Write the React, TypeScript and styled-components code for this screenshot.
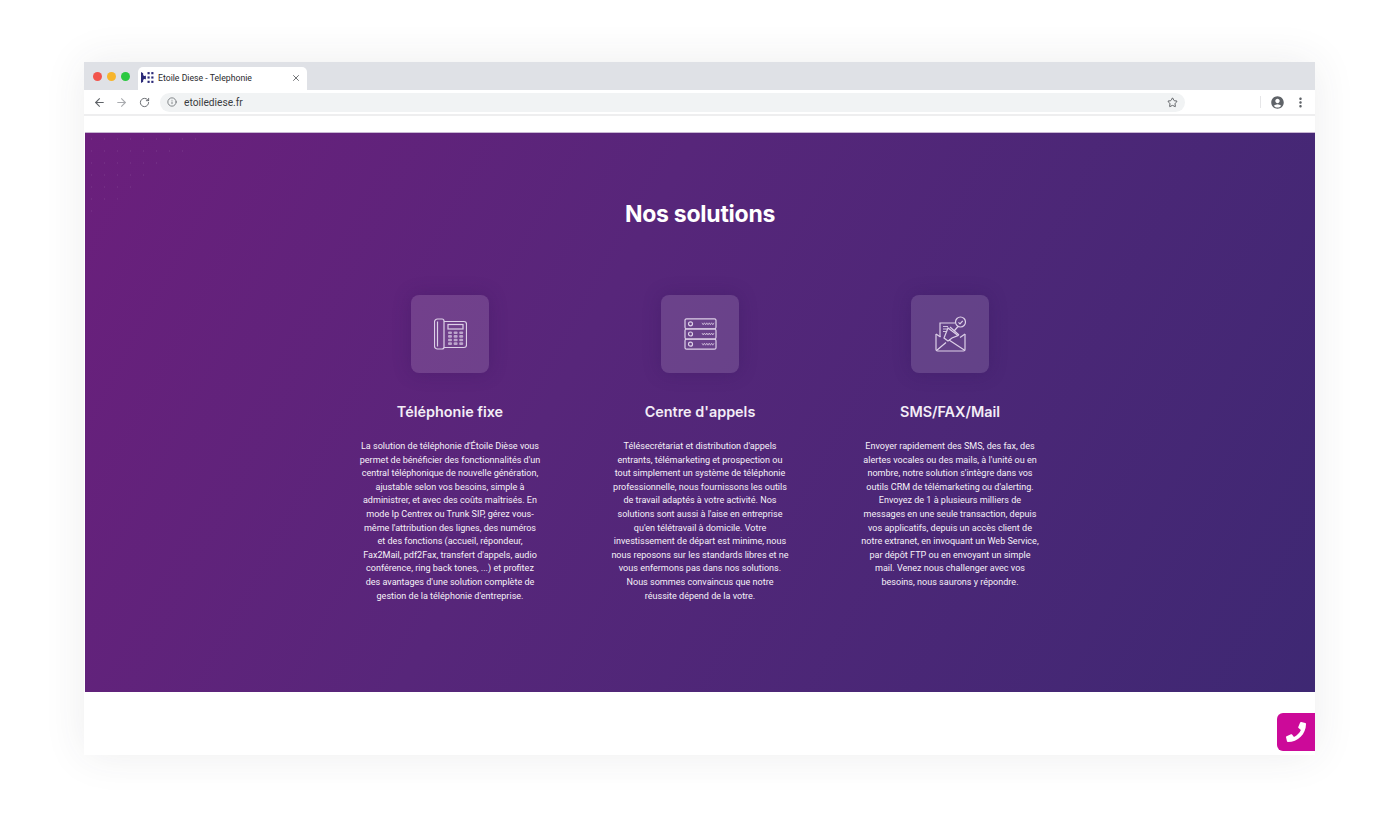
import React from "react";
import styled, { createGlobalStyle } from "styled-components";
import { ArrowLeft, ArrowRight, RotateCw, Info, Star, X } from "lucide-react";
import { FaPhone } from "react-icons/fa";
import { MdAccountCircle, MdMoreVert } from "react-icons/md";

const Global = createGlobalStyle`
    html, body {
        margin: 0;
        padding: 0;
        background: #ffffff;
        font-family: "Roboto", "Liberation Sans", sans-serif;
    }
`;

const Page = styled.div`
    width: 1400px;
    height: 820px;
    padding: 62px 85px 0 84px;
    box-sizing: border-box;
    overflow: hidden;
`;

const Browser = styled.div`
    position: relative;
    height: 693px;
    display: flex;
    flex-direction: column;
    background: #fff;
    box-shadow: 0 0 40px rgba(60, 60, 70, 0.09);
`;

const TabStrip = styled.div`
    height: 28px;
    flex: none;
    display: flex;
    align-items: flex-end;
    background: #dfe1e6;
    padding-left: 9px;
    box-sizing: border-box;
`;

const Lights = styled.div`
    display: flex;
    gap: 5px;
    align-self: flex-start;
    margin-top: 10px;
    width: 46px;
`;

const Light = styled.span<{ $color: string }>`
    width: 9px;
    height: 9px;
    border-radius: 50%;
    background: ${(p) => p.$color};
`;

const Tab = styled.div`
    width: 169px;
    height: 23px;
    margin-left: -1px;
    display: flex;
    align-items: center;
    background: #fff;
    border-radius: 5px 5px 0 0;
    padding: 0 6px 2px 3px;
    box-sizing: border-box;
    font-size: 8.7px;
    color: #2a2a2e;
`;

const TabTitle = styled.span`
    margin-left: 4px;
    flex: 1;
    white-space: nowrap;
`;

const Toolbar = styled.div`
    height: 26px;
    flex: none;
    display: flex;
    align-items: center;
    padding: 0 7px 0 4px;
    box-sizing: border-box;
    border-bottom: 2px solid #eeeeef;
    background: #fff;
`;

const NavButton = styled.span<{ $muted?: boolean }>`
    width: 22.5px;
    height: 20px;
    display: flex;
    align-items: center;
    justify-content: center;
    color: ${(p) => (p.$muted ? "#a9abaf" : "#5f6368")};
`;

const Omnibox = styled.div`
    width: 1025px;
    height: 19px;
    margin-left: 4.5px;
    display: flex;
    align-items: center;
    padding: 0 7px;
    box-sizing: border-box;
    background: #f1f3f4;
    border-radius: 10px;
    color: #5f6368;
`;

const Url = styled.span`
    flex: 1;
    margin-left: 7px;
    font-size: 10.2px;
    color: #3a3c40;
`;

const Actions = styled.div`
    margin-left: auto;
    display: flex;
    align-items: center;
    gap: 8px;
    color: #5f6368;
`;

const Divider = styled.span`
    width: 1px;
    height: 12px;
    background: #e6e6e8;
    margin-right: 1px;
`;

const Gap = styled.div`
    height: 17px;
    flex: none;
    background: #fff;
`;

const Hero = styled.section`
    position: relative;
    height: 559px;
    flex: none;
    margin-left: 1px;
    padding-top: 66px;
    box-sizing: border-box;
    background: linear-gradient(118deg, #6b1f7c 0%, #57267a 40%, #3e2873 100%);
    box-shadow: 0 -1px 0 #c8b6d3;
    color: #fff;
    text-align: center;

    &::before {
        content: "";
        position: absolute;
        left: 0;
        top: 0;
        width: 125px;
        height: 90px;
        background-image: radial-gradient(rgba(255, 255, 255, 0.06) 0.7px, transparent 1.1px);
        background-size: 13px 12px;
        clip-path: polygon(0 0, 100% 0, 0 100%);
    }
`;

const Title = styled.h2`
    margin: 0;
    font-family: "Inter", "Liberation Sans", sans-serif;
    font-size: 23px;
    line-height: 30px;
    font-weight: 700;
    letter-spacing: -0.25px;
`;

const Columns = styled.div`
    margin-top: 66px;
    display: flex;
    justify-content: center;
`;

const Column = styled.article`
    width: 250px;
    display: flex;
    flex-direction: column;
    align-items: center;
`;

const Tile = styled.div`
    width: 78px;
    height: 78px;
    display: flex;
    align-items: center;
    justify-content: center;
    border-radius: 8px;
    background: rgba(255, 255, 255, 0.13);
    box-shadow: 0 0 18px rgba(50, 20, 90, 0.3);
    color: #ddd0e8;
`;

const Name = styled.h3`
    margin: 28px 0 0;
    font-family: "Inter", "Liberation Sans", sans-serif;
    font-size: 14.4px;
    line-height: 22px;
    font-weight: 600;
    color: #f3edf6;
`;

const Text = styled.p`
    margin: 17px 0 0;
    font-size: 9.05px;
    line-height: 13.6px;
    font-weight: 400;
    color: #f6f1f8;
    white-space: pre-line;
`;

const CallButton = styled.div`
    position: absolute;
    right: 0;
    bottom: 4px;
    width: 38px;
    height: 38px;
    display: flex;
    align-items: center;
    justify-content: center;
    background: #cc0a99;
    border-radius: 6px 0 0 6px;
    color: #fff;
`;

const Favicon = () => (
    <svg width="13" height="13" viewBox="0 0 12 12" fill="#2b2a78">
        <path d="M0 1l2 1v2l2 1v2L2 8v2l-2 1z" />
        <path d="M2.5 5.2l2-1v3.6l-2-1z" />
        <rect x="6" y="1" width="2" height="2" />
        <rect x="9.5" y="1" width="2" height="2" />
        <rect x="6" y="5" width="2" height="2" />
        <rect x="9.5" y="5" width="2" height="2" />
        <rect x="6" y="9" width="2" height="2" />
        <rect x="9.5" y="9" width="2" height="2" />
    </svg>
);

const PhoneIcon = () => (
    <svg width="33" height="32" viewBox="0 0 33 32" fill="none" stroke="currentColor" strokeWidth="1.2">
        <path d="M3.5 1h4.5a2 2 0 0 1 2 2v26a2 2 0 0 1-2 2H3.5a3 3 0 0 1-3-3V4a3 3 0 0 1 3-3z" />
        <path d="M3.5 3.5v25" />
        <path d="M10 3.5h20a2.5 2.5 0 0 1 2.5 2.5v21a2.5 2.5 0 0 1-2.5 2.5H10" />
        <rect x="14" y="6.5" width="15" height="4.5" />
        <g fill="currentColor" stroke="none" opacity="0.7">
            {[0, 1, 2, 3].map((r) =>
                [0, 1, 2].map((c) => (
                    <rect key={r + "-" + c} x={14 + c * 5.6} y={13.5 + r * 3.6} width="4" height="2.6" rx="1" />
                ))
            )}
        </g>
    </svg>
);

const ServerIcon = () => (
    <svg width="33" height="32" viewBox="0 0 33 32" fill="none" stroke="currentColor" strokeWidth="1.2">
        {[0.8, 11, 21.2].map((y) => (
            <g key={y}>
                <rect x="1" y={y} width="31" height="10" rx="1.5" />
                <circle cx="6.5" cy={y + 5} r="2" />
                <path d={`M18 ${y + 4}l1.2 2 1.2-2 1.2 2 1.2-2 1.2 2 1.2-2 1.2 2 1.2-2 1.2 2 1.2-2`} strokeWidth="0.9" opacity="0.8" />
            </g>
        ))}
    </svg>
);

const MailIcon = () => (
    <svg width="31" height="36" viewBox="0 0 31 36" fill="none" stroke="currentColor" strokeWidth="1.2">
        <path d="M1 18v15.5A1.5 1.5 0 0 0 2.5 35h26a1.5 1.5 0 0 0 1.5-1.5V18" />
        <path d="M1 18l4.5 3M30 18l-5 3.5" />
        <path d="M1.5 34.5l9.5-8M30 34.5L14 24" />
        <path d="M5 21V7h15" />
        <path d="M8 10.5h5M8 13h4M8 15.5h3" strokeWidth="0.9" />
        <path d="M9 22l4-10 10 7.5-6 2.5-4 3z" />
        <path d="M15 11l9 8M19.5 14.5l3.5-4" />
        <circle cx="25.5" cy="6" r="5" />
        <path d="M23.5 6.3l1.5 1.5 2.7-3" />
    </svg>
);

const solutions = [
    {
        icon: <PhoneIcon />,
        name: "Téléphonie fixe",
        text: `La solution de téléphonie d'Étoile Dièse vous
permet de bénéficier des fonctionnalités d'un
central téléphonique de nouvelle génération,
ajustable selon vos besoins, simple à
administrer, et avec des coûts maîtrisés. En
mode Ip Centrex ou Trunk SIP, gérez vous-
même l'attribution des lignes, des numéros
et des fonctions (accueil, répondeur,
Fax2Mail, pdf2Fax, transfert d'appels, audio
conférence, ring back tones, ...) et profitez
des avantages d'une solution complète de
gestion de la téléphonie d'entreprise.`,
    },
    {
        icon: <ServerIcon />,
        name: "Centre d'appels",
        text: `Télésecrétariat et distribution d'appels
entrants, télémarketing et prospection ou
tout simplement un système de téléphonie
professionnelle, nous fournissons les outils
de travail adaptés à votre activité. Nos
solutions sont aussi à l'aise en entreprise
qu'en télétravail à domicile. Votre
investissement de départ est minime, nous
nous reposons sur les standards libres et ne
vous enfermons pas dans nos solutions.
Nous sommes convaincus que notre
réussite dépend de la votre.`,
    },
    {
        icon: <MailIcon />,
        name: "SMS/FAX/Mail",
        text: `Envoyer rapidement des SMS, des fax, des
alertes vocales ou des mails, à l'unité ou en
nombre, notre solution s'intègre dans vos
outils CRM de télémarketing ou d'alerting.
Envoyez de 1 à plusieurs milliers de
messages en une seule transaction, depuis
vos applicatifs, depuis un accès client de
notre extranet, en invoquant un Web Service,
par dépôt FTP ou en envoyant un simple
mail. Venez nous challenger avec vos
besoins, nous saurons y répondre.`,
    },
];

function App() {
    return (
        <Page>
            <Global />
            <Browser>
                <TabStrip>
                    <Lights>
                        <Light $color="#f2544c" />
                        <Light $color="#f7b52c" />
                        <Light $color="#2bc840" />
                    </Lights>
                    <Tab>
                        <Favicon />
                        <TabTitle>Etoile Diese - Telephonie</TabTitle>
                        <X size={10} strokeWidth={2} color="#55585c" />
                    </Tab>
                </TabStrip>
                <Toolbar>
                    <NavButton><ArrowLeft size={13} strokeWidth={2} /></NavButton>
                    <NavButton $muted><ArrowRight size={13} strokeWidth={2} /></NavButton>
                    <NavButton><RotateCw size={11} strokeWidth={2} /></NavButton>
                    <Omnibox>
                        <Info size={10} strokeWidth={1.8} />
                        <Url>etoilediese.fr</Url>
                        <Star size={11} strokeWidth={2} color="#55585c" />
                    </Omnibox>
                    <Actions>
                        <Divider />
                        <MdAccountCircle size={15} />
                        <MdMoreVert size={15} />
                    </Actions>
                </Toolbar>
                <Gap />
                <Hero>
                    <Title>Nos solutions</Title>
                    <Columns>
                        {solutions.map((s) => (
                            <Column key={s.name}>
                                <Tile>{s.icon}</Tile>
                                <Name>{s.name}</Name>
                                <Text>{s.text}</Text>
                            </Column>
                        ))}
                    </Columns>
                </Hero>
                <CallButton><FaPhone size={20} /></CallButton>
            </Browser>
        </Page>
    );
}

export default App;
